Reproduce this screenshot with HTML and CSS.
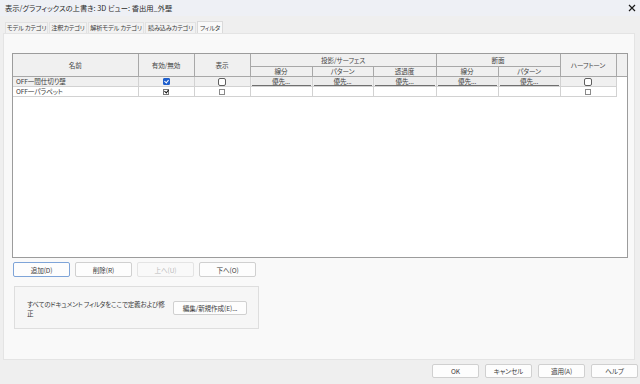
FILE: index.html
```html
<!DOCTYPE html>
<html lang="ja">
<head>
  <meta charset="UTF-8">
  <title>表示/グラフィックスの上書き</title>
  <link rel="stylesheet" href="styles.css">
</head>
<body>
  <div class="dialogo">
    <div class="titulo">
      <span>表示/グラフィックスの上書き: 3D ビュー: 香出用_外壁</span>
      <span class="cerrar">
        <svg width="10" height="10" viewBox="0 0 10 10">
          <path d="M2 2 L8 8 M8 2 L2 8" stroke="#1a1a1a" stroke-width="1.2" fill="none"/>
        </svg>
      </span>
    </div>

    <div class="pestanas">
      <div class="pestana" style="width:43px">モデル カテゴリ</div>
      <div class="pestana" style="width:38px">注釈カテゴリ</div>
      <div class="pestana" style="width:56px">解析モデル カテゴリ</div>
      <div class="pestana" style="width:51px">読み込みカテゴリ</div>
      <div class="pestana activa" style="width:26px">フィルタ</div>
    </div>

    <div class="panel">
      <div class="tabla-caja">
        <table class="tabla">
          <colgroup>
            <col style="width:125px"><col style="width:56px"><col style="width:56px">
            <col style="width:62px"><col style="width:61px"><col style="width:63px">
            <col style="width:62px"><col style="width:62px"><col style="width:56px">
            <col style="width:11px">
          </colgroup>
          <thead>
            <tr class="cab1">
              <th rowspan="2">名前</th>
              <th rowspan="2">有効/無効</th>
              <th rowspan="2">表示</th>
              <th colspan="3">投影/サーフェス</th>
              <th colspan="2">断面</th>
              <th rowspan="2">ハーフトーン</th>
              <th rowspan="2" class="vacio"></th>
            </tr>
            <tr class="cab2">
              <th>線分</th><th>パターン</th><th>透過度</th>
              <th>線分</th><th>パターン</th>
            </tr>
          </thead>
          <tbody>
            <tr class="sel">
              <td class="nombre">OFF一間仕切り壁</td>
              <td><span class="check azul"></span></td>
              <td><span class="check redondo"></span></td>
              <td><div class="prior">優先...</div></td>
              <td><div class="prior">優先...</div></td>
              <td><div class="prior">優先...</div></td>
              <td><div class="prior">優先...</div></td>
              <td><div class="prior">優先...</div></td>
              <td><span class="check redondo"></span></td>
              <td class="libre"></td>
            </tr>
            <tr>
              <td class="nombre">OFF一パラペット</td>
              <td><span class="check chico marcado"></span></td>
              <td><span class="check chico"></span></td>
              <td></td><td></td><td></td><td></td><td></td>
              <td><span class="check chico"></span></td>
              <td class="libre"></td>
            </tr>
          </tbody>
        </table>
      </div>

      <div class="acciones">
        <button class="foco">追加(D)</button>
        <button>削除(R)</button>
        <button disabled>上へ(U)</button>
        <button>下へ(O)</button>
      </div>

      <div class="grupo">
        <p>すべてのドキュメント フィルタをここで定義および修正</p>
        <button class="editar">編集/新規作成(E)...</button>
      </div>
    </div>

    <div class="pie">
      <button>OK</button>
      <button>キャンセル</button>
      <button>適用(A)</button>
      <button>ヘルプ</button>
    </div>
  </div>
</body>
</html>
```

FILE: styles.css
```css
* {
  box-sizing: border-box;
}

body {
  margin: 0;
  width: 640px;
  height: 384px;
  overflow: hidden;
  background: #efefef;
  font-family: "Noto Sans CJK JP", "Noto Sans", sans-serif;
  font-size: 6.6px;
  font-feature-settings: "palt";
  letter-spacing: -0.1px;
  color: #3c3c3c;
}

.dialogo {
  width: 640px;
  height: 384px;
  display: flex;
  flex-direction: column;
}

.titulo {
  flex: none;
  height: 16px;
  background: #eef0f5;
  display: grid;
  grid-template-columns: 1fr 10px;
  align-items: center;
  padding: 0 3px 0 5px;
  font-size: 7.3px;
  letter-spacing: 0;
  color: #2a2a2a;
}

.cerrar {
  display: flex;
  width: 10px;
  height: 10px;
}

.pestanas {
  height: 17px;
  display: flex;
  align-items: flex-end;
  gap: 1px;
  padding-left: 5px;
}

.pestana {
  height: 11px;
  line-height: 10px;
  text-align: center;
  white-space: nowrap;
  overflow: hidden;
  font-size: 6.2px;
  letter-spacing: -0.2px;
  background: #f2f2f2;
  border: 1px solid #e2e2e2;
  border-bottom: none;
  color: #3a3a3a;
}

.pestana.activa {
  height: 12px;
  line-height: 11px;
  background: #f9f9f9;
  border-color: #dadada;
}

.panel {
  margin: 0 5px 0 3px;
  height: 327px;
  background: #f9f9f9;
  border: 1px solid #e4e4e4;
  padding: 19px 6px 0 8px;
}

.tabla-caja {
  height: 205px;
  background: #fff;
  border: 1px solid #9c9c9c;
}

.tabla {
  border-collapse: collapse;
  table-layout: fixed;
  width: 614px;
}

.tabla th {
  font-weight: normal;
  background: #f0f0f0;
  border: 1px solid #a8a8a8;
  padding: 0;
  color: #444;
  white-space: nowrap;
}

.tabla th.vacio {
  border-right: none;
}

.cab1 th {
  height: 12px;
  border-top: none;
}

.cab1 th:first-child {
  border-left: none;
}

.cab2 th {
  height: 10px;
  line-height: 9px;
}

.tabla td {
  height: 10px;
  padding: 0;
  border: 1px solid #d2d2d2;
  text-align: center;
  line-height: 8px;
}

.tabla td:first-child {
  border-left: none;
}

.tabla td.nombre {
  text-align: left;
  padding-left: 3px;
}

.tabla tr.sel td {
  background: #f0f0f0;
}

.tabla td.libre,
.tabla tr.sel td.libre {
  background: #fff;
  border: none;
}

.prior {
  height: 9px;
  line-height: 8px;
  background: #ececec;
  border-bottom: 1px solid #6f6f6f;
  margin: 0 1px;
}

.check {
  display: inline-block;
  vertical-align: middle;
  width: 6px;
  height: 6px;
  border: 1px solid #8a8a8a;
  background: #fff;
  position: relative;
}

.check.redondo {
  width: 8px;
  height: 8px;
  border-color: #5e5e5e;
  border-radius: 2px;
}

.check.azul {
  width: 7px;
  height: 7px;
  background: #1f5fcc;
  border-color: #1f5fcc;
  border-radius: 1px;
}

.check.azul::after,
.check.marcado::after {
  content: "";
  position: absolute;
  left: 1px;
  top: 0;
  width: 2px;
  height: 3px;
  border: solid #fff;
  border-width: 0 1px 1px 0;
  transform: rotate(40deg);
}

.check.marcado {
  border-color: #777;
}

.check.marcado::after {
  left: 1px;
  top: -1px;
  border-color: #111;
}

button {
  font-family: inherit;
  font-size: 6.6px;
  font-feature-settings: "palt";
  letter-spacing: -0.1px;
  color: #3c3c3c;
  background: #fdfdfd;
  border: 1px solid #d0d0d0;
  border-radius: 2px;
  padding: 0;
}

button:disabled {
  color: #b9b9b9;
  border-color: #e4e4e4;
  background: #f9f9f9;
}

button.foco {
  border-color: #7ea4d8;
}

.acciones {
  display: flex;
  gap: 5px;
  margin: 4px 0 0 1px;
}

.acciones button {
  width: 57px;
  height: 15px;
}

.grupo {
  margin: 9px 0 0 2px;
  width: 245px;
  height: 43px;
  border: 1px solid #dedede;
  background: #f6f6f6;
  display: flex;
  align-items: center;
  padding: 0 11px 0 12px;
  justify-content: space-between;
}

.grupo p {
  margin: 0;
  width: 142px;
  line-height: 9px;
  padding-top: 2px;
  letter-spacing: -0.25px;
}

.editar {
  flex: none;
  width: 74px;
  height: 14px;
}

.pie {
  display: flex;
  justify-content: flex-end;
  gap: 6px;
  padding: 4px 2px 0 0;
}

.pie button {
  width: 47px;
  height: 14px;
}
```
